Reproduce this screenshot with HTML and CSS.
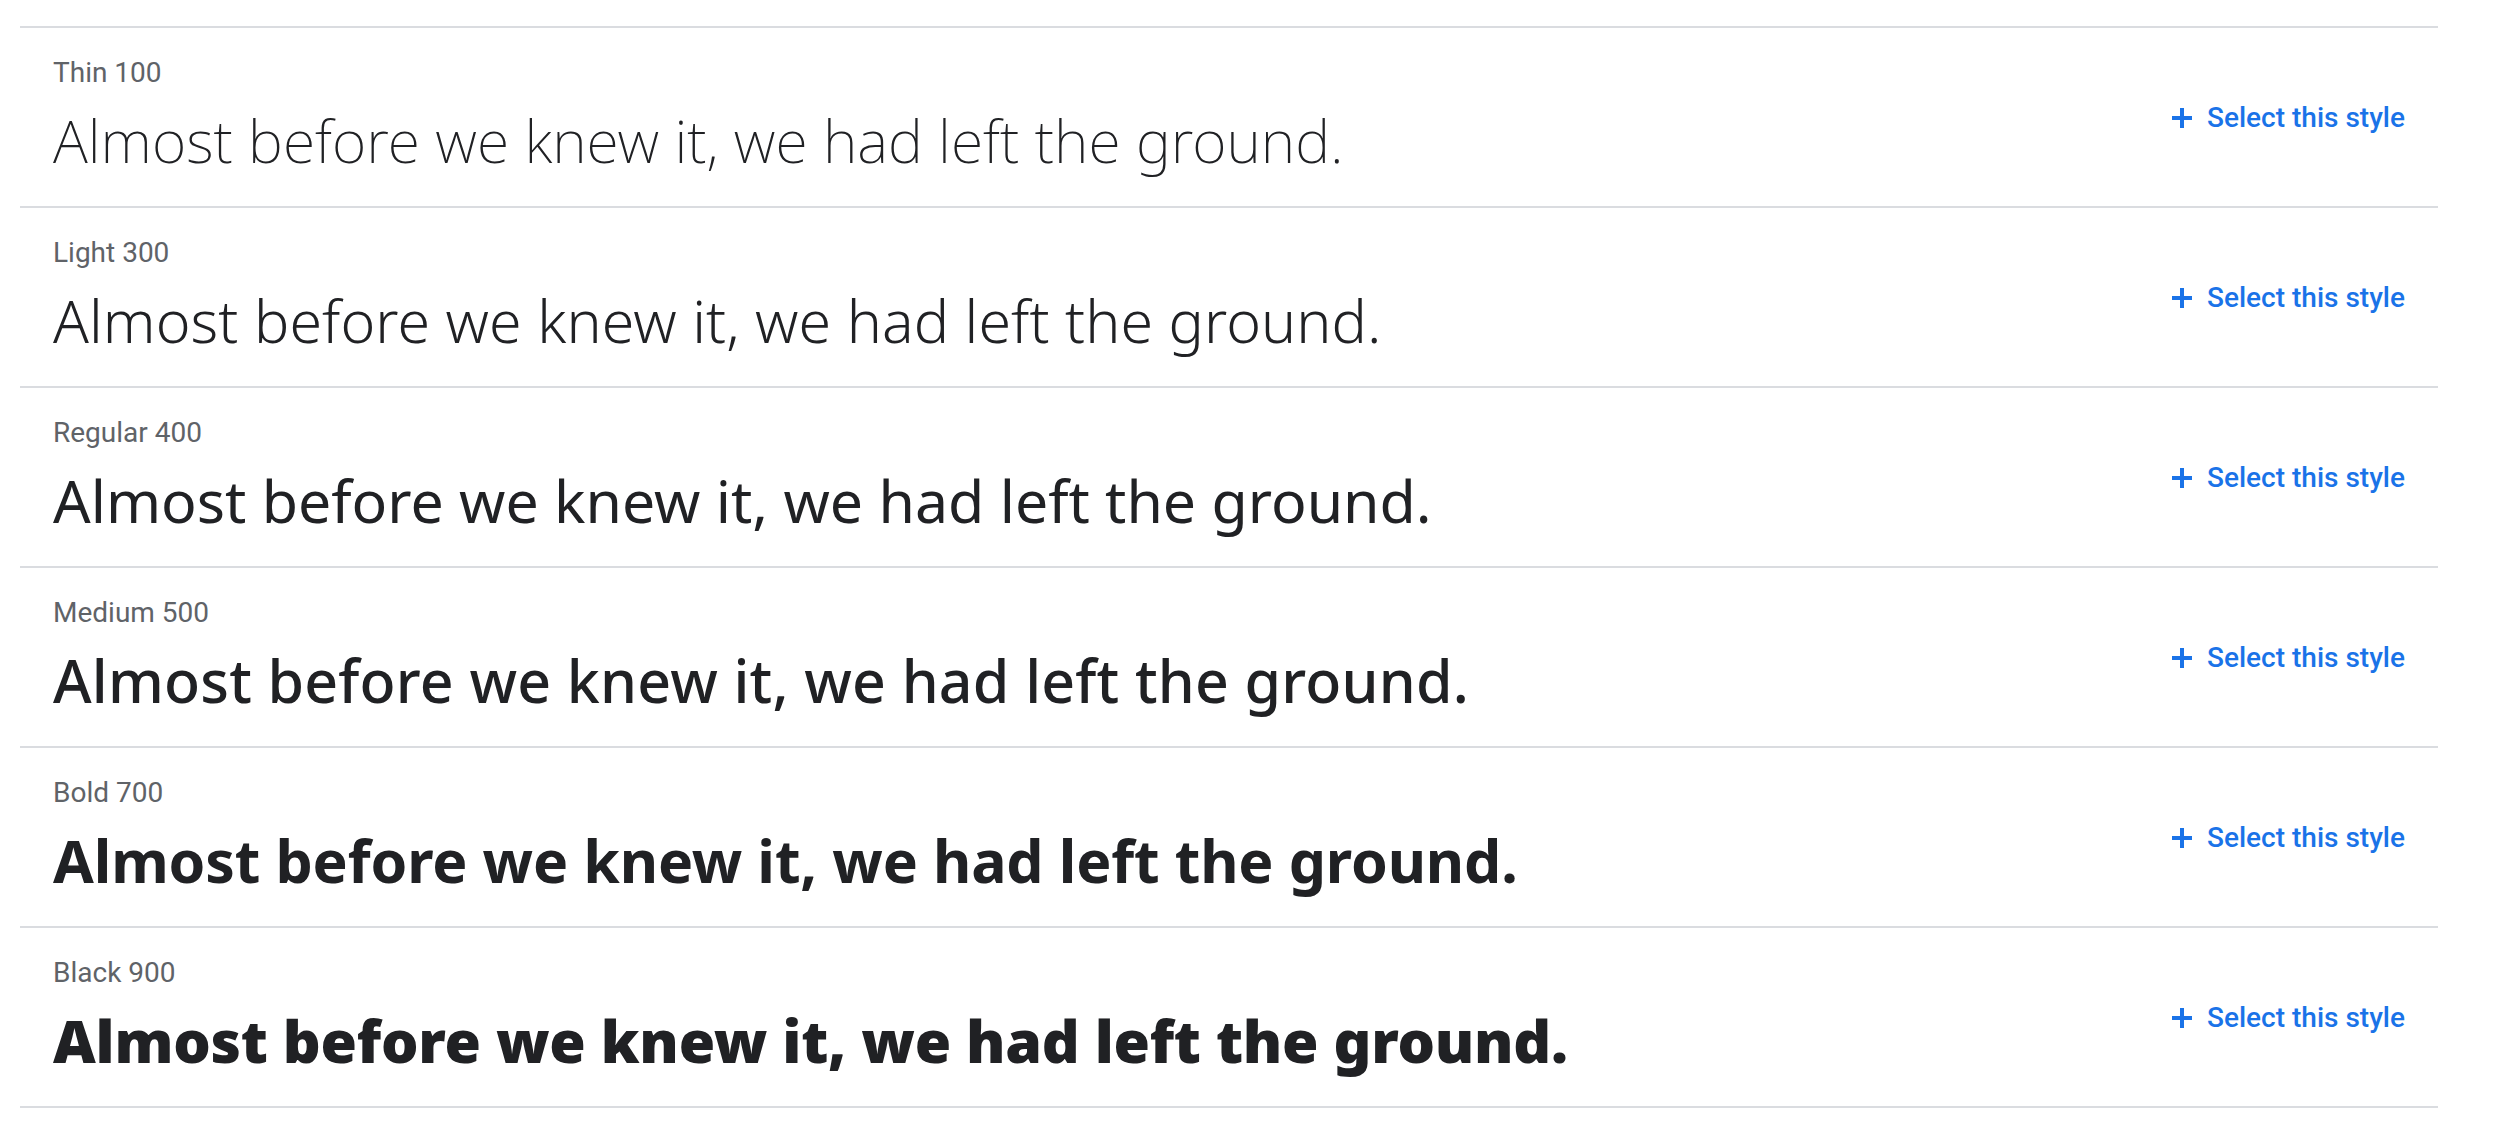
FILE: index.html
```html
<!DOCTYPE html>
<html>
<head>
<meta charset="utf-8">
<title>Styles</title>
<link rel="stylesheet" href="styles.css">
</head>
<body>
<div class="styles">
  <div class="row">
    <div class="info">
      <div class="label">Thin 100</div>
      <div class="sample w100">Almost before we knew it, we had left the ground.</div>
    </div>
    <a class="select" href="#"><svg class="plus" viewBox="0 0 20 20" width="20" height="20"><rect x="0" y="8" width="20" height="4"/><rect x="8" y="0" width="4" height="20"/></svg><span>Select this style</span></a>
  </div>
  <div class="row">
    <div class="info">
      <div class="label">Light 300</div>
      <div class="sample w300">Almost before we knew it, we had left the ground.</div>
    </div>
    <a class="select" href="#"><svg class="plus" viewBox="0 0 20 20" width="20" height="20"><rect x="0" y="8" width="20" height="4"/><rect x="8" y="0" width="4" height="20"/></svg><span>Select this style</span></a>
  </div>
  <div class="row">
    <div class="info">
      <div class="label">Regular 400</div>
      <div class="sample w400">Almost before we knew it, we had left the ground.</div>
    </div>
    <a class="select" href="#"><svg class="plus" viewBox="0 0 20 20" width="20" height="20"><rect x="0" y="8" width="20" height="4"/><rect x="8" y="0" width="4" height="20"/></svg><span>Select this style</span></a>
  </div>
  <div class="row">
    <div class="info">
      <div class="label">Medium 500</div>
      <div class="sample w500">Almost before we knew it, we had left the ground.</div>
    </div>
    <a class="select" href="#"><svg class="plus" viewBox="0 0 20 20" width="20" height="20"><rect x="0" y="8" width="20" height="4"/><rect x="8" y="0" width="4" height="20"/></svg><span>Select this style</span></a>
  </div>
  <div class="row">
    <div class="info">
      <div class="label">Bold 700</div>
      <div class="sample w700">Almost before we knew it, we had left the ground.</div>
    </div>
    <a class="select" href="#"><svg class="plus" viewBox="0 0 20 20" width="20" height="20"><rect x="0" y="8" width="20" height="4"/><rect x="8" y="0" width="4" height="20"/></svg><span>Select this style</span></a>
  </div>
  <div class="row last">
    <div class="info">
      <div class="label">Black 900</div>
      <div class="sample w900">Almost before we knew it, we had left the ground.</div>
    </div>
    <a class="select" href="#"><svg class="plus" viewBox="0 0 20 20" width="20" height="20"><rect x="0" y="8" width="20" height="4"/><rect x="8" y="0" width="4" height="20"/></svg><span>Select this style</span></a>
  </div>
</div>
</body>
</html>
```
FILE: styles.css
```css
* { box-sizing: border-box; }
body {
  margin: 0;
  background: #fff;
  font-family: Roboto, "Noto Sans", sans-serif;
}
.styles {
  margin: 26px 64px 0 20px;
}
.row {
  display: flex;
  align-items: center;
  justify-content: space-between;
  border-top: 2px solid #dadce0;
  padding: 0 33px;
}
.row.last {
  border-bottom: 2px solid #dadce0;
}
.info {
  padding: 29px 0 30px;
}
.label {
  font-size: 28px;
  line-height: 32px;
  color: #5f6368;
}
.sample {
  margin-top: 15px;
  font-family: "Noto Sans", sans-serif;
  font-size: 59px;
  line-height: 72px;
  color: #202124;
  white-space: nowrap;
}
.w100 { font-weight: 200; }
.w300 { font-weight: 300; letter-spacing: 0.1px; }
.w400 { font-weight: 400; }
.w500 { font-weight: 500; letter-spacing: 0.2px; }
.w700 { font-weight: 700; letter-spacing: -0.13px; }
.w900 { font-weight: 900; letter-spacing: -0.23px; }
.select {
  display: flex;
  align-items: center;
  gap: 15px;
  padding-top: 2px;
  color: #1a73e8;
  text-decoration: none;
  font-size: 28px;
  font-weight: 500;
  line-height: 32px;
  white-space: nowrap;
}
.plus {
  display: block;
  fill: #1a73e8;
}
```
